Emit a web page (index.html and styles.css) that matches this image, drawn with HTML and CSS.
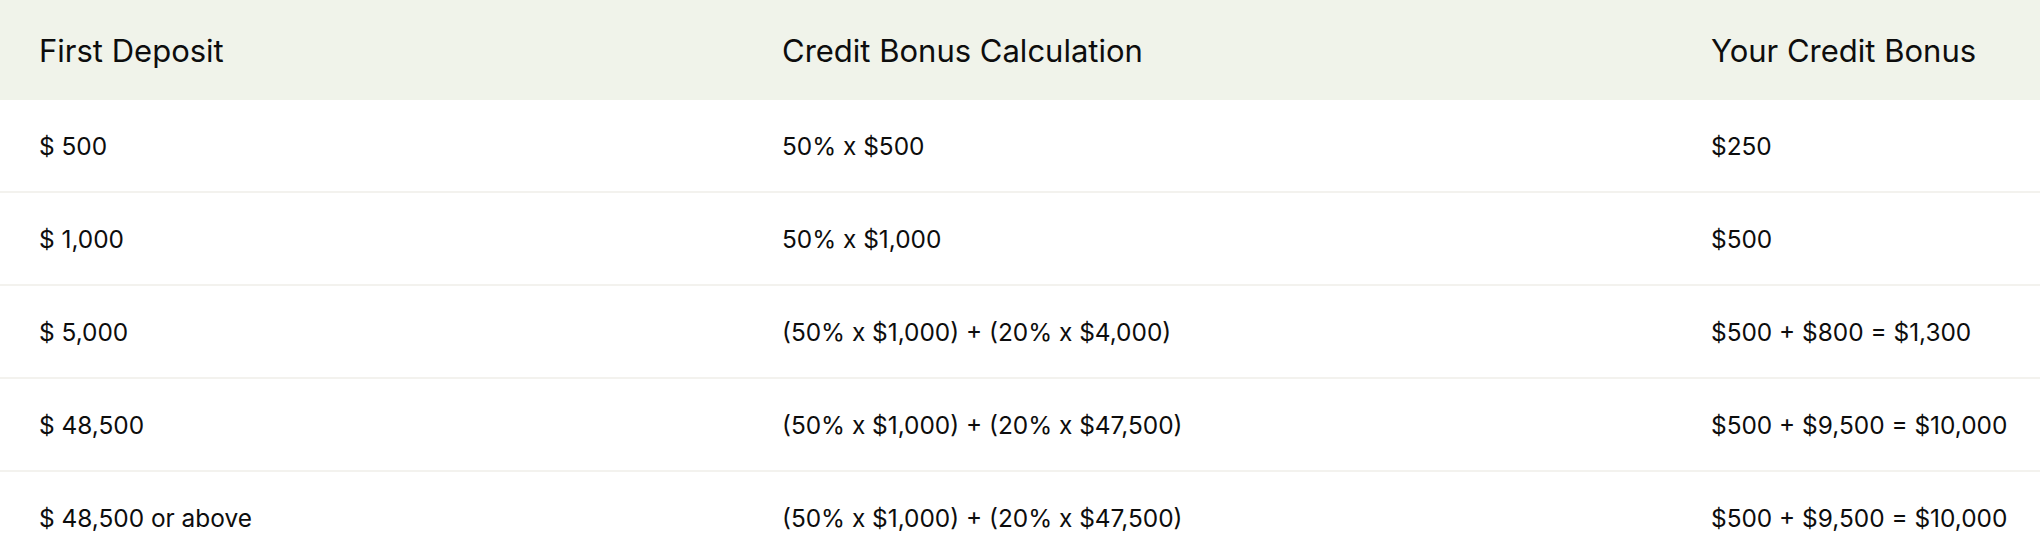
FILE: index.html
```html
<!DOCTYPE html>
<html lang="en">
<head>
<meta charset="utf-8">
<title>Credit Bonus</title>
<link rel="stylesheet" href="styles.css">
</head>
<body>
<div class="table">
  <div class="row head">
    <div class="cell">First Deposit</div>
    <div class="cell">Credit Bonus Calculation</div>
    <div class="cell">Your Credit Bonus</div>
  </div>
  <div class="row">
    <div class="cell">$ 500</div>
    <div class="cell">50% x $500</div>
    <div class="cell">$250</div>
  </div>
  <div class="row">
    <div class="cell">$ 1,000</div>
    <div class="cell">50% x $1,000</div>
    <div class="cell">$500</div>
  </div>
  <div class="row">
    <div class="cell">$ 5,000</div>
    <div class="cell">(50% x $1,000) + (20% x $4,000)</div>
    <div class="cell">$500 + $800 = $1,300</div>
  </div>
  <div class="row">
    <div class="cell">$ 48,500</div>
    <div class="cell">(50% x $1,000) + (20% x $47,500)</div>
    <div class="cell">$500 + $9,500 = $10,000</div>
  </div>
  <div class="row">
    <div class="cell">$ 48,500 or above</div>
    <div class="cell">(50% x $1,000) + (20% x $47,500)</div>
    <div class="cell">$500 + $9,500 = $10,000</div>
  </div>
</div>
</body>
</html>
```

FILE: styles.css
```css
html, body {
  margin: 0;
  padding: 0;
  background: #ffffff;
}
body {
  font-family: Inter, "Liberation Sans", sans-serif;
  color: #0d0d0d;
}
.table {
  width: 2040px;
}
.row {
  display: grid;
  grid-template-columns: 743px 929px 1fr;
  height: 91px;
  border-bottom: 2px solid #f3f2ee;
  align-items: center;
  font-size: 24.4px;
}
.row.head {
  height: 100px;
  border-bottom: none;
  background: #f0f3ea;
  font-size: 31px;
}
.cell {
  padding-left: 39px;
  white-space: nowrap;
}
```
